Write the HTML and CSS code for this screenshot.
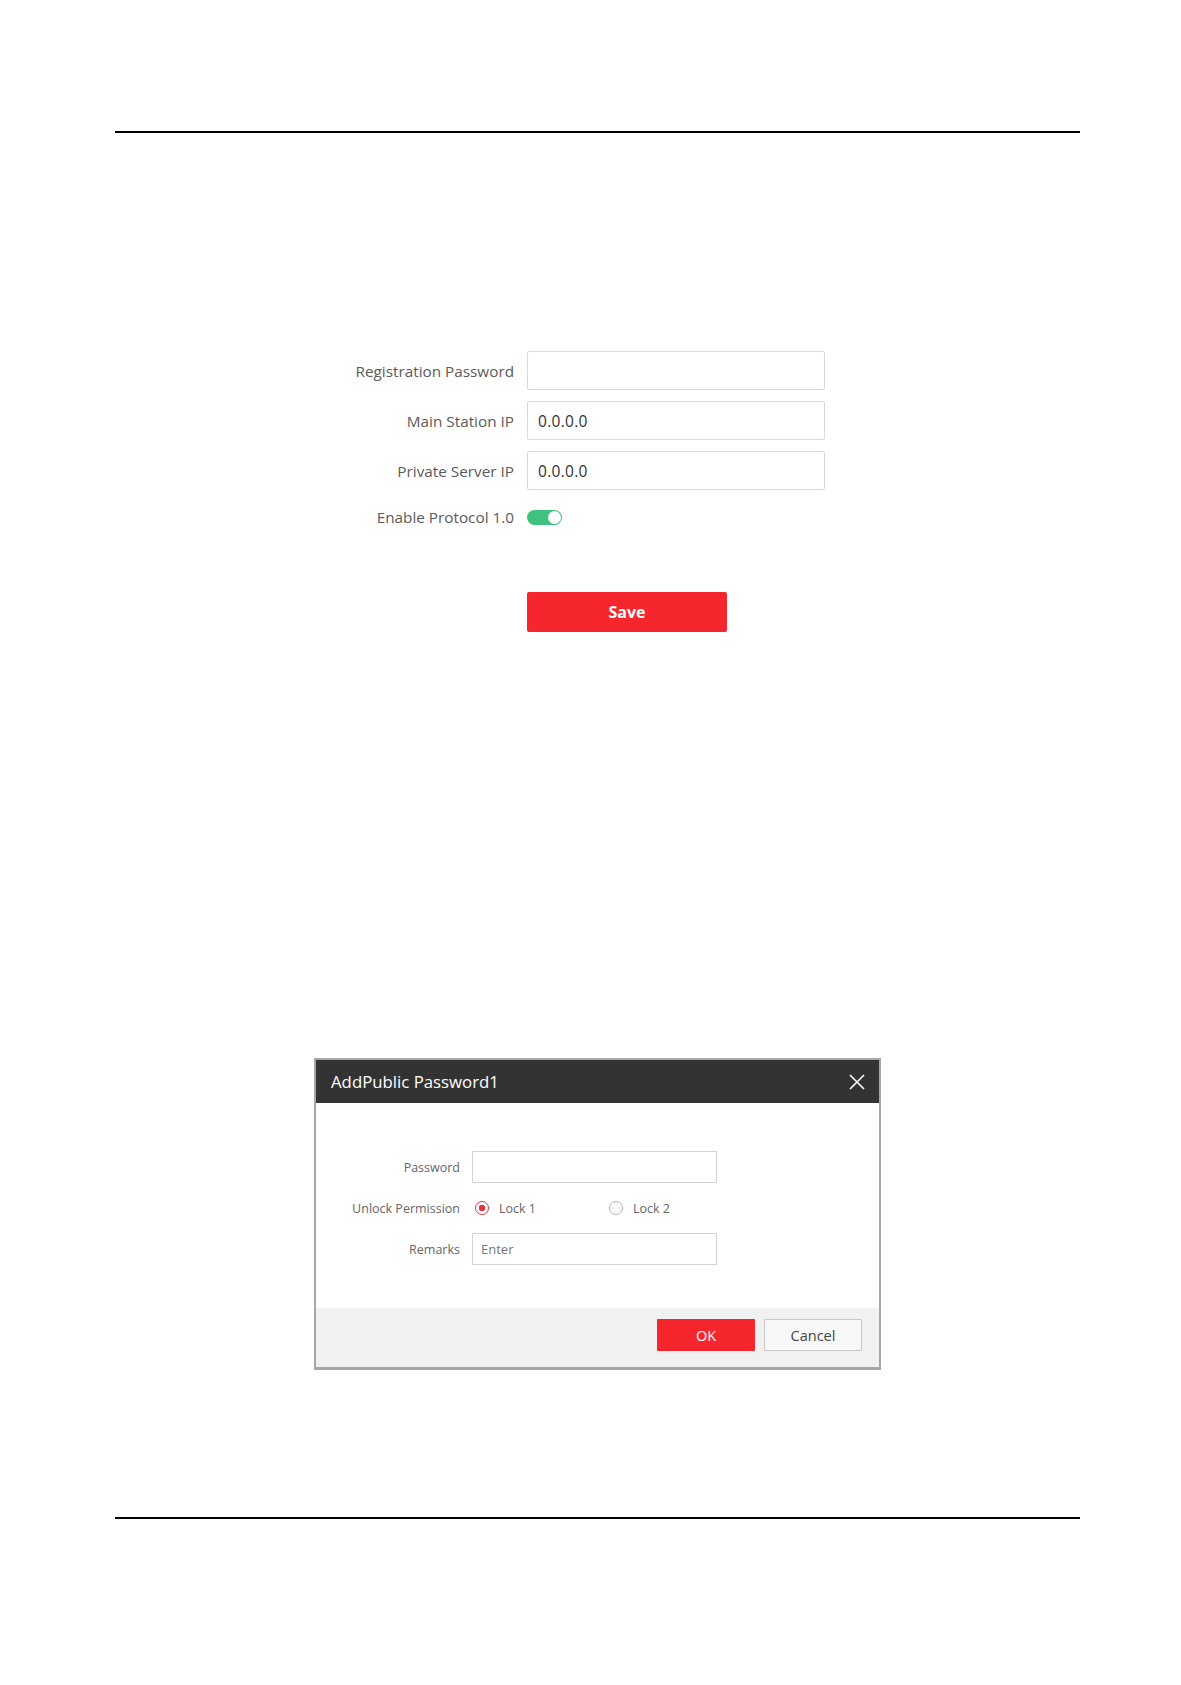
FILE: index.html
```html
<!DOCTYPE html>
<html lang="en">
<head>
    <meta charset="UTF-8">
    <meta name="viewport" content="width=device-width, initial-scale=1.0">
    <title>Intercom Settings</title>
    <link rel="stylesheet" href="styles.css">
</head>
<body>
    <div class="page">
        <div class="rule top"></div>

        <form class="settings">
            <label class="lbl">Registration Password</label>
            <input class="field" type="password">
            <label class="lbl">Main Station IP</label>
            <input class="field" type="text" value="0.0.0.0">
            <label class="lbl">Private Server IP</label>
            <input class="field" type="text" value="0.0.0.0">
            <label class="lbl">Enable Protocol 1.0</label>
            <div class="toggle-cell"><span class="toggle"><span class="knob"></span></span></div>
            <span></span>
            <button type="button" class="save">Save</button>
        </form>

        <div class="dialog">
            <div class="dlg-head">
                <span class="dlg-title">AddPublic Password1</span>
                <svg class="close" width="18" height="18" viewBox="0 0 18 18">
                    <path d="M2 2 L16 16 M16 2 L2 16" stroke="#fff" stroke-width="1.6" fill="none"/>
                </svg>
            </div>
            <div class="dlg-body">
                <label class="dlbl">Password</label>
                <input class="dfield" type="password">
                <label class="dlbl">Unlock Permission</label>
                <div class="radios">
                    <span class="radio on"></span><span class="rtext first">Lock 1</span>
                    <span class="radio"></span><span class="rtext">Lock 2</span>
                </div>
                <label class="dlbl">Remarks</label>
                <input class="dfield" type="text" placeholder="Enter">
            </div>
            <div class="dlg-foot">
                <button type="button" class="ok">OK</button>
                <button type="button" class="cancel">Cancel</button>
            </div>
        </div>

        <div class="rule bottom"></div>
    </div>
</body>
</html>
```

FILE: styles.css
```css
body {
    margin: 0;
    background: #fff;
    font-family: "Open Sans", "Noto Sans", sans-serif;
}
.page {
    padding: 131px 101px 0 115px;
}
.rule {
    height: 2px;
    background: #000;
}
.rule.bottom {
    margin-top: 147px;
}

/* top form */
.settings {
    display: grid;
    grid-template-columns: 184px 298px;
    column-gap: 13px;
    row-gap: 11px;
    margin: 218px 0 0 215px;
    align-items: center;
}
.lbl {
    text-align: right;
    color: #5a5a5a;
    font-size: 15.3px;
    white-space: nowrap;
}
.field {
    box-sizing: border-box;
    height: 39px;
    border: 1px solid #d9d9d9;
    border-radius: 2px;
    padding: 0 10px;
    font-family: "Open Sans", sans-serif;
    font-size: 15.5px;
    letter-spacing: 0.3px;
    color: #333;
}
.toggle-cell {
    height: 32px;
    display: flex;
    align-items: center;
}
.toggle {
    width: 35px;
    height: 15px;
    border-radius: 8px;
    background: #3fc27f;
    position: relative;
}
.knob {
    position: absolute;
    right: 1px;
    top: 1px;
    width: 13px;
    height: 13px;
    border-radius: 50%;
    background: #fff;
}
.save {
    margin-top: 48px;
    width: 200px;
    height: 40px;
    border: 0;
    border-radius: 2px;
    background: #f5262e;
    color: #fff;
    font-family: "Open Sans", sans-serif;
    font-weight: bold;
    font-size: 16px;
}

/* dialog */
.dialog {
    margin: 426px 0 0 199px;
    width: 563px;
    border: 2px solid #a6a6a6;
    border-bottom-width: 3px;
    background: #fff;
}
.dlg-head {
    height: 43px;
    background: #333;
    display: flex;
    align-items: center;
    justify-content: space-between;
    padding: 0 13px 0 15px;
}
.dlg-title {
    color: #fff;
    font-size: 16.8px;
}
.dlg-body {
    display: grid;
    grid-template-columns: 144px 245px;
    column-gap: 12px;
    row-gap: 9px;
    padding: 48px 0 43px;
    align-items: center;
}
.dlbl {
    text-align: right;
    color: #666;
    font-size: 12.5px;
    white-space: nowrap;
}
.dfield {
    box-sizing: border-box;
    height: 32px;
    border: 1px solid #d4d4d4;
    padding: 0 8px;
    font-family: "Open Sans", sans-serif;
    font-size: 13px;
    color: #333;
}
.dfield::placeholder {
    color: #777;
}
.radios {
    height: 32px;
    display: flex;
    align-items: center;
    font-size: 12.5px;
    color: #666;
}
.radio {
    flex-shrink: 0;
    box-sizing: border-box;
    width: 14px;
    height: 14px;
    border: 1px solid #b5b5b5;
    border-radius: 50%;
    margin: 0 10px 0 3px;
}
.radio.on {
    border-color: #e7353d;
    background: radial-gradient(circle, #e7353d 0 3px, #fff 3.5px);
}
.rtext.first {
    flex-shrink: 0;
    width: 107px;
}
.dlg-foot {
    box-sizing: border-box;
    height: 59px;
    background: #f1f1f1;
    display: flex;
    align-items: flex-start;
    justify-content: flex-end;
    gap: 9px;
    padding: 11px 17px 0 0;
}
.dlg-foot button {
    width: 98px;
    height: 32px;
    font-family: "Open Sans", sans-serif;
    font-size: 14.5px;
    border-radius: 1px;
}
.ok {
    border: 0;
    background: #f5262e;
    color: #fff;
}
.cancel {
    border: 1px solid #c8c8c8;
    background: #f8f8f8;
    color: #444;
}
```
